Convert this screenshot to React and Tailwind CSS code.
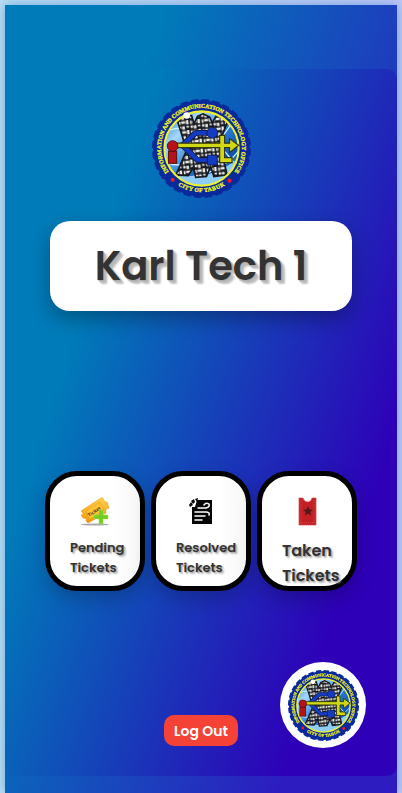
import React, { useId } from "react";

function Seal({ className }) {
  const id = useId().replace(/[^a-zA-Z0-9]/g, "");
  return (
    <svg viewBox="0 0 120 120" className={className} role="img" aria-label="Information and Communication Technology Office, City of Tabuk">
      <defs>
        <path id={`top${id}`} d="M25.500 94.500A49 49 0 1 1 94.500 94.500" />
        <path id={`low${id}`} d="M24 92A49 49 0 0 0 96 92" />
        <linearGradient id={`sky${id}`} x1="0" y1="0" x2="1" y2="1">
          <stop offset="0" stopColor="#1c6fd0" />
          <stop offset=".25" stopColor="#a5d8fa" />
          <stop offset=".5" stopColor="#2f83d8" />
          <stop offset=".75" stopColor="#0b55b5" />
          <stop offset="1" stopColor="#9ad4f7" />
        </linearGradient>
        <pattern id={`win${id}`} width="14" height="12" patternUnits="userSpaceOnUse" patternTransform="rotate(-6)">
          <rect width="14" height="12" fill="#15171c" />
          <path d="M1 1H4V4H1ZM5 1H8V5H5ZM10 1H13V3H10ZM1 7H3V11H1ZM4 7H9V10H4ZM10 6H13V11H10Z" fill="#ecece8" />
        </pattern>
        <clipPath id={`disc${id}`}><circle cx="60" cy="60" r="45" /></clipPath>
      </defs>
      <circle cx="60" cy="60" r="58.500" fill="#0a2a9c" />
      <circle cx="60" cy="60" r="58" fill="none" stroke="#0a2a9c" strokeWidth="4" strokeDasharray="9 4" />
      <circle cx="60" cy="60" r="45" fill={`url(#sky${id})`} />
      <g clipPath={`url(#disc${id})`}>
        <path d="M15 40Q60 20 105 85M20 78Q60 90 100 24M32 96Q80 94 106 62" fill="none" stroke="#d9f1ff" strokeWidth="1.500" />
        <path d="M22 88Q60 105 105 72Q96 100 64 106Q38 106 22 88" fill="#8fcdf6" />
        <path d="M29 21L48 20L51 30L55 21L62 18L70 22L73 29L78 20L94 21L82 52L91 92L75 94L71 82L66 94L53 95L50 83L44 93L29 92L42 62Z" fill={`url(#win${id})`} stroke="#16191f" strokeWidth="2" />
      </g>
      <circle cx="60" cy="60" r="45" fill="none" stroke="#edf02c" strokeWidth="2.500" />
      <circle cx="42" cy="20" r="4" fill="#fff" />
      <g fill="none" strokeLinejoin="round">
        <path d="M37 56L53 41H70M37 56L55 74H69" stroke="#10194c" strokeWidth="7" />
        <path d="M37 56L53 41H70M37 56L55 74H69" stroke="#153bc1" strokeWidth="5" />
      </g>
      <circle cx="73" cy="41" r="6.500" fill="#153bc1" stroke="#10194c" />
      <rect x="67" y="68" width="12" height="12" fill="#153bc1" stroke="#10194c" />
      <path d="M25 53.500H82V44H88V53.500H94V48L105 56L94 65V59H88V71H97V77H82V59H25Z" fill="#d1d916" stroke="#35390d" strokeWidth="1.500" />
      <rect x="20" y="63" width="10" height="15" fill="#b51317" stroke="#42080c" />
      <circle cx="25" cy="57" r="6.500" fill="#b51317" stroke="#42080c" />
      <circle cx="25" cy="98" r="2.500" fill="#ee1723" />
      <circle cx="94" cy="99" r="2.500" fill="#ee1723" />
      <g fill="#f2f221" stroke="#f2f221" strokeWidth=".4" fontSize="7" className="font-['Liberation_Serif',serif] font-bold">
        <text>
          <textPath href={`#top${id}`} startOffset="50%" textAnchor="middle">INFORMATION AND COMMUNICATION TECHNOLOGY OFFICE</textPath>
        </text>
        <text dy="5">
          <textPath href={`#low${id}`} startOffset="50%" textAnchor="middle">CITY OF TABUK</textPath>
        </text>
      </g>
    </svg>
  );
}

function PendingIcon() {
  return (
    <svg viewBox="0 0 30 30" className="h-[30px] w-[30px]" aria-hidden="true">
      <defs>
        <linearGradient id="gold" x1="0" y1="0" x2="0" y2="1">
          <stop stopColor="#ffd04b" /><stop offset="1" stopColor="#ee960c" />
        </linearGradient>
      </defs>
      <ellipse cx="15" cy="28.500" rx="14" ry="1" fill="#a8a8a8" />
      <path d="M1 15L21 2L23 2Q23 6 27 6L29 12Q25 12 26 17L8 27L6 25Q7 22 3 22L1 19Q5 18 1 15Z" fill="url(#gold)" stroke="#e99a16" strokeWidth=".6" />
      <path d="M6 15L20 6L24 14L10 23Z" fill="#ffc338" stroke="#e49a18" strokeWidth=".5" />
      <text x="9" y="21" fontSize="5" fill="#4c3510" transform="rotate(-33 9 21)" className="font-['Liberation_Sans',sans-serif] font-bold">Ticket</text>
      <path d="M19 14H23V19H28V23H23V28H19V23H14V19H19Z" fill="#76cb20" stroke="#a1e550" strokeWidth=".5" />
    </svg>
  );
}

function ResolvedIcon() {
  return (
    <svg viewBox="0 0 30 30" className="h-[30px] w-[30px]" aria-hidden="true">
      <path d="M11 4H26V28H6V11H9Z" fill="#050505" />
      <path d="M3 9L5 6L7 9L4 11ZM5 5L8 3L9 6L7 8ZM9 3L12 2L11 6Z" fill="#050505" />
      <path d="M12 12H20Q24 11 23 8Q20 6 18 9M9 16H20Q24 16 23 19M9 20H19M9 24H16" fill="none" stroke="#fff" strokeWidth="1.500" strokeLinecap="round" />
    </svg>
  );
}

function TakenIcon() {
  return (
    <svg viewBox="0 0 30 30" className="h-[30px] w-[30px]" aria-hidden="true">
      <path d="M7 2H11Q12 6 16 6Q19 6 20 2H24V29H7Z" fill="#c32025" stroke="#d7484a" strokeWidth=".7" />
      <path d="M9 4V27M22 4V27M8 26.500H23" fill="none" stroke="#e0564f" strokeWidth=".6" strokeDasharray="1 1" />
      <path d="M16 10L17.500 13.500L21 13.800L18.300 16L19.200 19.500L16 17.500L12.800 19.500L13.700 16L11 13.800L14.500 13.500Z" fill="#54181b" />
    </svg>
  );
}

const cards = [
  { first: "Pending", Icon: PendingIcon, text: "text-[13px] leading-5", shade: "bg-linear-to-r from-white from-70% to-[#f7f7f7]" },
  { first: "Resolved", Icon: ResolvedIcon, text: "text-[13px] leading-5", shade: "bg-linear-to-r from-white from-70% to-[#f7f7f7]" },
  { first: "Taken", Icon: TakenIcon, text: "text-base leading-[25px]", shade: "bg-white" },
];

export default function App() {
  return (
    <main className="flex min-h-screen bg-linear-to-r from-[#b9def2] to-[#bdc7f5] px-[5px] pt-[5px] font-['Poppins','Inter',sans-serif] font-semibold text-[#333]">
      <div className="w-full bg-[linear-gradient(108deg,#007bb9_25%,#2d1cc0_82%)] pt-16 pb-[17px] shadow-[0_0_10px_rgba(0,90,190,0.4)]">
        <section className="flex flex-col items-center rounded-[10px] bg-[linear-gradient(108deg,#007bb9_25%,#2e00b8_82%)] pt-[30px] pb-[30px]">
          <Seal className="h-[99px] w-[99px]" />
          <div className="mt-[23px] w-full px-[45px]">
            <h1 className="rounded-[20px] bg-white py-[15px] text-center text-[40px] leading-[60px] shadow-[0_8px_20px_rgba(0,0,0,0.3)] [text-shadow:1px_1px_1px_#aaa,2px_2px_1px_#bbb,3px_3px_2px_#bbb,4px_4px_2px_#ccc]">
              Karl Tech 1
            </h1>
          </div>
          <nav className="mt-40 flex justify-center gap-[6px]">
            {cards.map(({ first, Icon, text, shade }) => (
              <button key={first} type="button" className={`flex h-[120px] w-[100px] flex-col items-start rounded-[32px] border-[5px] border-black pt-5 pl-5 text-left shadow-[0_8px_20px_rgba(0,0,0,0.2)] ${shade}`}>
                <span className="ml-[10px]"><Icon /></span>
                <span className={`mt-3 [text-shadow:1px_1px_1px_#aaa,2px_2px_2px_#bbb] ${text}`}>
                  {first}<br />Tickets
                </span>
              </button>
            ))}
          </nav>
          <button type="button" className="mt-[124px] h-[31px] rounded-[10px] bg-[#f44336] px-[10px] text-sm text-white">
            Log Out
          </button>
        </section>
      </div>
      <button type="button" aria-label="Office home" className="fixed right-9 bottom-[45px] grid h-[86px] w-[86px] place-items-center rounded-full bg-white">
        <Seal className="h-[71px] w-[71px]" />
      </button>
    </main>
  );
}
